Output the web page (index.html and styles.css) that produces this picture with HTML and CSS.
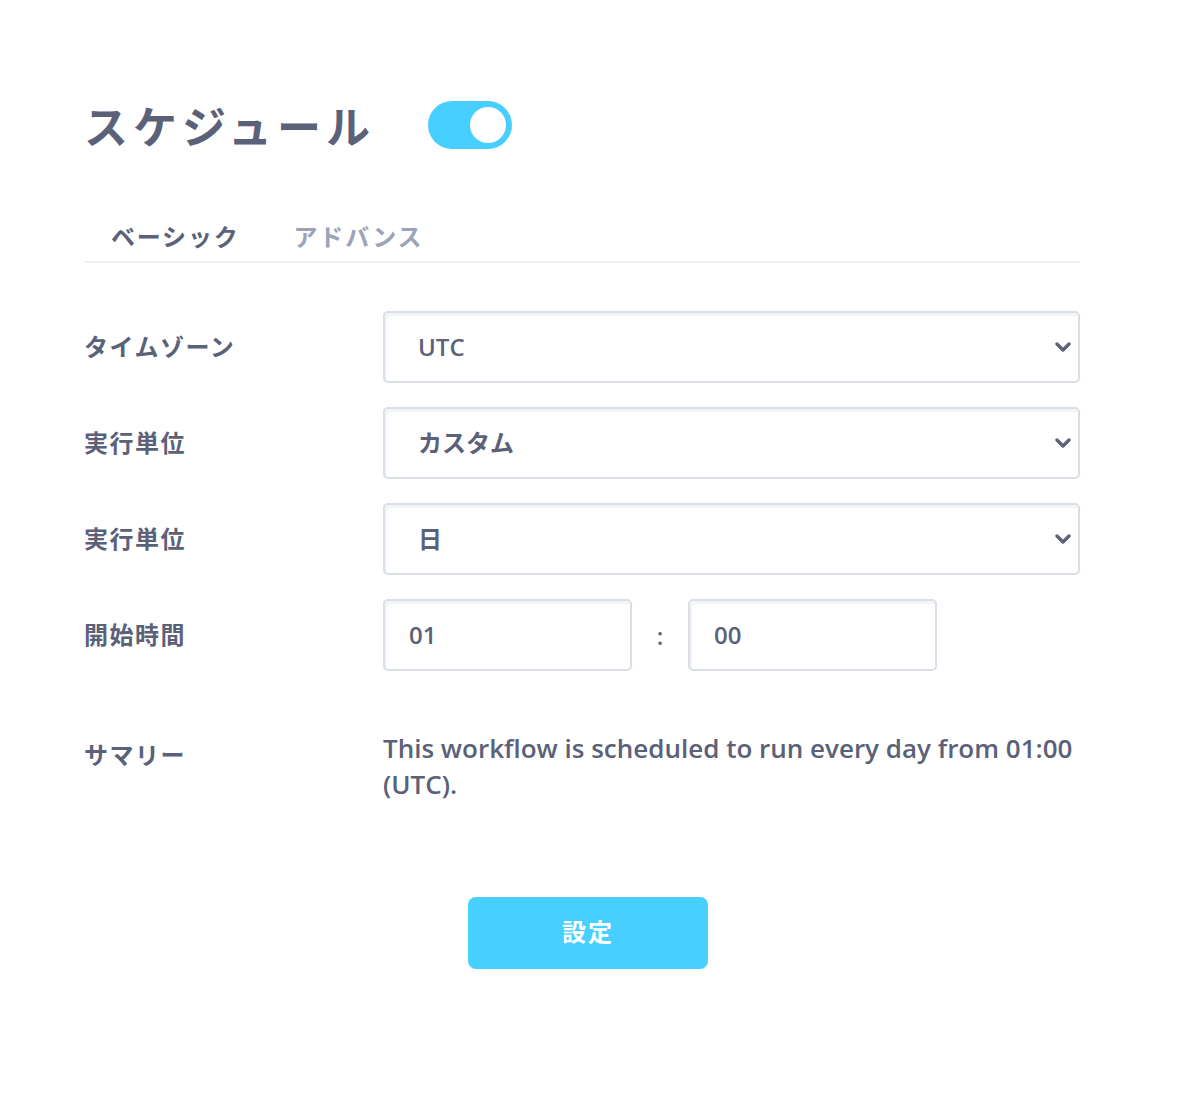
FILE: index.html
```html
<!DOCTYPE html>
<html lang="ja">
<head>
    <meta charset="UTF-8">
    <meta name="viewport" content="width=device-width, initial-scale=1.0">
    <title>スケジュール</title>
    <link rel="stylesheet" href="styles.css">
</head>
<body>
    <div class="page">
        <div class="header">
            <h1>スケジュール</h1>
            <label class="toggle">
                <input type="checkbox" checked>
                <span class="knob"></span>
            </label>
        </div>

        <ul class="tabs">
            <li class="tab active">ベーシック</li>
            <li class="tab">アドバンス</li>
        </ul>

        <form class="form" onsubmit="return false;">
            <div class="row">
                <label class="label" for="timezone">タイムゾーン</label>
                <div class="select-wrap">
                    <select id="timezone">
                        <option>UTC</option>
                    </select>
                    <svg class="chevron" width="16" height="10" viewBox="0 0 16 10"><path d="M2 2l6 6 6-6" fill="none" stroke="#5a6178" stroke-width="3.4" stroke-linecap="round" stroke-linejoin="round"/></svg>
                </div>
            </div>
            <div class="row">
                <label class="label" for="unit">実行単位</label>
                <div class="select-wrap">
                    <select id="unit">
                        <option>カスタム</option>
                    </select>
                    <svg class="chevron" width="16" height="10" viewBox="0 0 16 10"><path d="M2 2l6 6 6-6" fill="none" stroke="#5a6178" stroke-width="3.4" stroke-linecap="round" stroke-linejoin="round"/></svg>
                </div>
            </div>
            <div class="row">
                <label class="label" for="period">実行単位</label>
                <div class="select-wrap">
                    <select id="period">
                        <option>日</option>
                    </select>
                    <svg class="chevron" width="16" height="10" viewBox="0 0 16 10"><path d="M2 2l6 6 6-6" fill="none" stroke="#5a6178" stroke-width="3.4" stroke-linecap="round" stroke-linejoin="round"/></svg>
                </div>
            </div>
            <div class="row">
                <label class="label" for="hour">開始時間</label>
                <div class="time">
                    <input type="text" id="hour" value="01">
                    <span class="colon">:</span>
                    <input type="text" id="minute" value="00">
                </div>
            </div>
            <div class="row summary">
                <span class="label">サマリー</span>
                <p class="summary-text">This workflow is scheduled to run every day from 01:00 (UTC).</p>
            </div>
            <div class="actions">
                <button type="submit">設定</button>
            </div>
        </form>
    </div>
</body>
</html>
```

FILE: styles.css
```css
body {
    margin: 0;
    background: #fff;
    color: #5a6178;
    font-family: "Open Sans", "Noto Sans CJK JP", sans-serif;
}

.page {
    width: 996px;
    margin-left: 84px;
    padding-top: 101px;
}

.header {
    display: flex;
    align-items: center;
    gap: 53px;
    height: 48px;
}

h1 {
    margin: 0;
    font-family: "Noto Sans CJK JP", sans-serif;
    font-size: 44px;
    font-weight: 700;
    letter-spacing: 5px;
    line-height: 48px;
}

.toggle {
    position: relative;
    width: 84px;
    height: 48px;
    border-radius: 24px;
    background: #47cfff;
    cursor: pointer;
}
.toggle input {
    display: none;
}
.toggle .knob {
    position: absolute;
    top: 6px;
    right: 6px;
    width: 36px;
    height: 36px;
    border-radius: 50%;
    background: #fff;
}

.tabs {
    list-style: none;
    margin: 64px 0 0;
    padding: 0;
    display: flex;
    border-bottom: 2px solid #eef1f5;
}
.tab {
    padding: 0 27px;
    font-family: "Noto Sans CJK JP", sans-serif;
    font-size: 24px;
    font-weight: 700;
    letter-spacing: 1.8px;
    line-height: 46px;
    padding-bottom: 2px;
    color: #9ba3b8;
}
.tab.active {
    color: #5a6178;
}

.form {
    margin-top: 48px;
    display: flex;
    flex-direction: column;
    gap: 24px;
}

.row {
    display: flex;
    align-items: center;
}

.label {
    width: 299px;
    flex-shrink: 0;
    padding-bottom: 3px;
    font-family: "Noto Sans CJK JP", sans-serif;
    font-size: 24px;
    font-weight: 700;
    letter-spacing: 1.5px;
}

.select-wrap {
    position: relative;
    flex: 1;
}

select,
.time input {
    box-sizing: border-box;
    height: 72px;
    border: 2px solid #d9dee7;
    border-radius: 5px;
    box-shadow: inset 2px 3px 0 #f1f4f8;
    background: #fff;
    color: #5a6178;
    font-family: "Open Sans", "Noto Sans CJK JP", sans-serif;
    font-size: 24px;
    font-weight: 600;
    outline: none;
}

select {
    width: 100%;
    padding: 0 40px 2px 33px;
    appearance: none;
    -webkit-appearance: none;
}

.chevron {
    position: absolute;
    right: 9px;
    top: 31px;
    pointer-events: none;
}

.time {
    display: flex;
    align-items: center;
}
.time input {
    width: 249px;
    padding: 0 24px 2px;
}
.colon {
    width: 56px;
    text-align: center;
    font-size: 24px;
    font-weight: 600;
}

.row.summary {
    align-items: flex-start;
    margin-top: 35px;
}
.row.summary .label {
    padding-top: 6px;
    line-height: 36px;
}
.summary-text {
    margin: 0;
    font-size: 26px;
    font-weight: 600;
    line-height: 36px;
    letter-spacing: 0;
}

.actions {
    display: flex;
    justify-content: center;
    padding-left: 12px;
    margin-top: 71px;
}

button {
    width: 240px;
    height: 72px;
    padding: 0 0 6px;
    border: none;
    border-radius: 8px;
    background: #47cfff;
    color: #fff;
    font-family: "Noto Sans CJK JP", sans-serif;
    font-size: 24px;
    font-weight: 700;
    letter-spacing: 2px;
    cursor: pointer;
}
```
